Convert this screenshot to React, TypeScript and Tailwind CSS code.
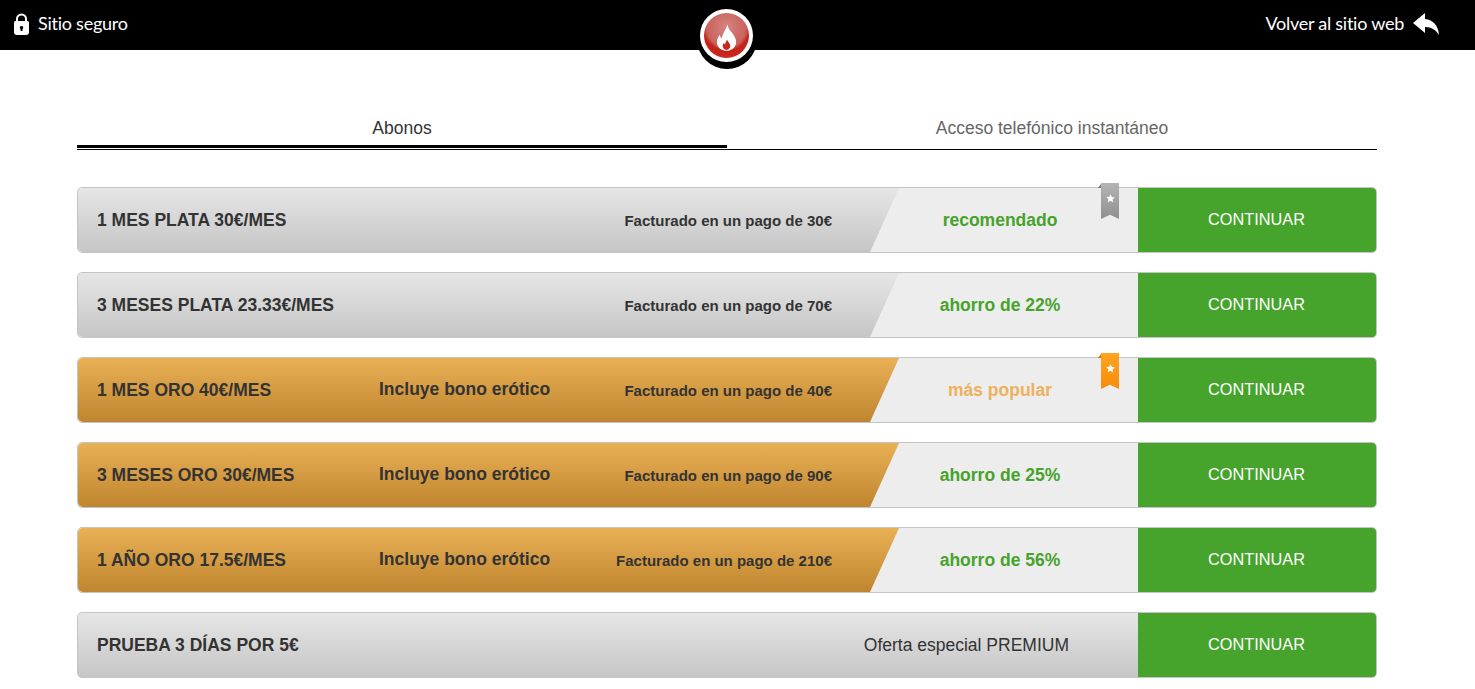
type Plan = {
  title: string;
  kind: 'plata' | 'oro';
  bono?: boolean;
  bill: string;
  note: string;
  noteColor?: string;
  ribbon?: 'gray' | 'orange';
};

const plans: Plan[] = [
  { title: '1 MES PLATA 30€/MES', kind: 'plata', bill: 'Facturado en un pago de 30€', note: 'recomendado', ribbon: 'gray' },
  { title: '3 MESES PLATA 23.33€/MES', kind: 'plata', bill: 'Facturado en un pago de 70€', note: 'ahorro de 22%' },
  { title: '1 MES ORO 40€/MES', kind: 'oro', bono: true, bill: 'Facturado en un pago de 40€', note: 'más popular', noteColor: 'text-[#eeb15c]', ribbon: 'orange' },
  { title: '3 MESES ORO 30€/MES', kind: 'oro', bono: true, bill: 'Facturado en un pago de 90€', note: 'ahorro de 25%' },
  { title: '1 AÑO ORO 17.5€/MES', kind: 'oro', bono: true, bill: 'Facturado en un pago de 210€', note: 'ahorro de 56%' },
];

function Logo() {
  return (
    <div className="absolute left-[697px] top-[7px] h-[62px] w-[60px] rounded-full bg-black">
      <div className="ml-[3px] mt-[2px] flex h-[53px] w-[53px] items-center justify-center rounded-full bg-white">
        <div className="flex h-[45px] w-[45px] items-center justify-center rounded-full bg-[radial-gradient(circle_at_50%_32%,#d58581_0%,#c9625d_52%,#c4211a_62%,#d22c1a_85%,#ee6a18_112%)]">
          <svg viewBox="0 0 22 28" className="mt-[4px] h-[27px] w-[21px]" fill="#fff">
            <path d="M12 0c.5 4.500 3 6.500 5.500 10 2.500 3.500 4 6.500 3.500 10-.6 4.500-5 8-10 8S1.500 24.500 1 20c-.4-3.500 1-6.500 3-9 .3 1.800 1 3 2.200 4C6.500 10 10.500 6 12 0z" />
            <path d="M11.500 16c.6 2 3.500 4 3.500 7 0 2.500-2 4-4 4s-4-1.500-4-4c0-1.500.7-2.500 1.500-3.200.3.800.6 1.200 1.100 1.500 0-2 1.300-3.500 1.900-5.300z" fill="#c9261c" />
          </svg>
        </div>
      </div>
    </div>
  );
}

function Ribbon({ color }: { color: 'gray' | 'orange' }) {
  const bg = color === 'gray' ? 'from-[#b5b5b5] to-[#8f8f8f]' : 'from-[#ffa321] to-[#f98c06]';
  const fold = color === 'gray' ? 'bg-[#777]' : 'bg-[#c9740a]';
  return (
    <div className="absolute right-[257px] top-[-5px] h-[36px] w-[18px]">
      <div className={`absolute left-[-3px] top-[1px] h-[4px] w-[3px] [clip-path:polygon(100%_0,100%_100%,0_100%)] ${fold}`} />
      <div className={`flex h-full w-full justify-center bg-gradient-to-b pt-[11px] [clip-path:polygon(0_0,100%_0,100%_100%,50%_88%,0_100%)] ${bg}`}>
        <svg viewBox="0 0 24 24" className="h-[9px] w-[9px]" fill="#fff">
          <path d="M12 1l3.400 7.300 7.900 1-5.800 5.500 1.500 7.900L12 18l-7 3.700 1.500-7.900L.7 8.300l7.900-1z" />
        </svg>
      </div>
    </div>
  );
}

function Continuar() {
  return (
    <button className="flex h-full w-[238px] shrink-0 items-center justify-center rounded-r-[4px] bg-[#46a32b] pb-[1px] pr-[1px] text-[16.3px] text-white">
      CONTINUAR
    </button>
  );
}

function PlanRow({ plan }: { plan: Plan }) {
  const bg = plan.kind === 'oro'
    ? 'from-[#e9b055] to-[#c0862f]'
    : 'from-[#e6e6e6] to-[#c6c6c6]';
  return (
    <div className="relative flex h-[66px] rounded-[5px] border border-[#c4c4c4] bg-[#ededed]">
      <div className={`flex h-full w-[821px] shrink-0 items-center rounded-l-[5px] bg-gradient-to-b pl-[19px] [clip-path:polygon(0_0,100%_0,792px_100%,0_100%)] ${bg}`}>
        <div className="w-[282px] text-[17.5px] font-bold text-[#333]">{plan.title}</div>
        {plan.bono && <div className="pb-[2px] text-[17.5px] font-bold text-[#333]">Incluye bono erótico</div>}
        <div className="absolute left-[300px] w-[454px] pt-[2px] text-right text-[15px] font-bold text-[#333]">{plan.bill}</div>
      </div>
      <div className={`ml-[-37px] flex flex-1 items-center justify-center text-[17.5px] font-bold ${plan.noteColor ?? 'text-[#46a32b]'}`}>
        {plan.note}
      </div>
      {plan.ribbon && <Ribbon color={plan.ribbon} />}
      <Continuar />
    </div>
  );
}

export default function App() {
  return (
    <div className="min-h-[689px] overflow-hidden bg-white font-['Liberation_Sans',Arial,sans-serif]">
      <header className="relative flex h-[50px] items-center justify-between bg-black pb-[3px] pl-[14px] pr-[36px] font-['Lato',sans-serif] text-[18px] text-white">
        <div className="flex items-center gap-[9px]">
          <svg viewBox="0 0 15 22" className="h-[22px] w-[15px]" fill="#fff">
            <path d="M2 9V6a5.500 5.500 0 0 1 11 0v3h-2V6a3.500 3.500 0 0 0-7 0v3z" />
            <path fillRule="evenodd" d="M1.500 8h12A1.500 1.500 0 0 1 15 9.500V19a3 3 0 0 1-3 3H3a3 3 0 0 1-3-3V9.500A1.500 1.500 0 0 1 1.500 8zm6 5a1.700 1.700 0 0 0-1 3.100V18h2v-1.900a1.700 1.700 0 0 0-1-3.100z" />
          </svg>
          <span className="tracking-[-0.25px]">Sitio seguro</span>
        </div>
        <Logo />
        <div className="flex items-center gap-[9px]">
          <span className="tracking-[-0.25px]">Volver al sitio web</span>
          <svg viewBox="0 0 26 22" className="h-[22px] w-[26px]" fill="#fff">
            <path d="M0 10 12 0v6C20 6.500 25.500 13 26 22 23 17 18.500 14 12 14v6z" />
          </svg>
        </div>
      </header>

      <main className="ml-[77px] w-[1300px]">
        <div className="mt-[65px] flex border-b border-black text-[17.5px] leading-[24px]">
          <div className="w-1/2 pb-[1px] text-center text-[#333]">
            <div className="translate-y-[1px]">Abonos</div>
            <div className="mt-[6px] h-[3px] bg-black" />
          </div>
          <div className="w-1/2 pb-[9px] pt-[1px] text-center text-[#666]">Acceso telefónico instantáneo</div>
        </div>

        <div className="mt-[37px] flex flex-col gap-[19px]">
          {plans.map((plan) => (
            <PlanRow key={plan.title} plan={plan} />
          ))}
          <div className="flex h-[66px] rounded-[5px] border border-[#c4c4c4] bg-gradient-to-b from-[#e6e6e6] to-[#c6c6c6]">
            <div className="flex flex-1 items-center justify-between pl-[19px] pr-[69px]">
              <span className="text-[17.5px] font-bold text-[#333]">PRUEBA 3 DÍAS POR 5€</span>
              <span className="text-[17.5px] text-[#333]">Oferta especial PREMIUM</span>
            </div>
            <Continuar />
          </div>
        </div>
      </main>
    </div>
  );
}
